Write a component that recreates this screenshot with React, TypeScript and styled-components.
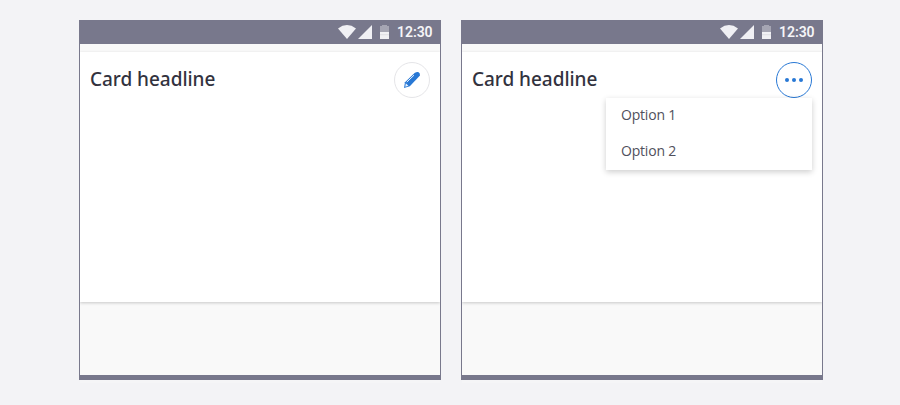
import React from "react";
import styled, { createGlobalStyle } from "styled-components";

const GlobalStyle = createGlobalStyle`
  * { box-sizing: border-box; }
  body { margin: 0; background: #f3f3f6; }
`;

const Page = styled.main`
  display: flex;
  gap: 20px;
  height: 405px;
  padding: 20px 77px 0 79px;
  background: #f3f3f6;
  font-family: "Noto Sans", sans-serif;
`;

const Device = styled.section`
  display: flex;
  flex-direction: column;
  width: 362px;
  height: 360px;
  border: 1px solid #78788c;
  border-width: 0 1px 5px;
  background: #f9f9f9;
  box-shadow: 0 4px 0 -1px #f5f5f7;
  overflow: hidden;
`;

const StatusBar = styled.header`
  display: flex;
  align-items: center;
  justify-content: flex-end;
  height: 24px;
  flex: none;
  padding-right: 7px;
  background: #78788c;
`;

const StatusIcons = styled.svg`
  display: block;
  width: 54px;
  height: 24px;
  margin-right: 5.5px;
`;

const Clock = styled.span`
  width: 36px;
  color: #f5f5f8;
  font: 600 14px/24px Roboto, sans-serif;
  letter-spacing: -0.05px;
  white-space: nowrap;
`;

const Card = styled.article`
  display: flex;
  align-items: flex-start;
  justify-content: space-between;
  height: 250px;
  margin-top: 8px;
  padding: 10px 10px 0;
  background: #fff;
  box-shadow: 0 1px 3px rgba(0, 0, 0, 0.2);
`;

const Headline = styled.h2`
  margin: 0;
  color: #32323e;
  font-size: 19px;
  font-weight: 500;
  line-height: 34px;
  letter-spacing: -0.04px;
  white-space: nowrap;
`;

const Actions = styled.div`
  position: relative;
  width: 36px;
  height: 36px;
`;

const RoundButton = styled.button<{ $active?: boolean }>`
  display: grid;
  place-items: center;
  width: 36px;
  height: 36px;
  padding: 0;
  border: 1px solid ${(p) => (p.$active ? "#2878d5" : "#e5e5e8")};
  border-radius: 50%;
  background: #fff;
`;

const Glyph = styled.svg`
  display: block;
  width: 20px;
  height: 20px;
`;

const Menu = styled.ul`
  position: absolute;
  top: 36px;
  right: 0;
  width: 206px;
  margin: 0;
  padding: 0;
  background: #fff;
  box-shadow: 0 2px 6px rgba(0, 0, 0, 0.2);
  list-style: none;
`;

const MenuItem = styled.li`
  height: 36px;
  padding-left: 15px;
  color: #50505c;
  font-family: "Open Sans", "Noto Sans", sans-serif;
  font-size: 14px;
  font-weight: 400;
  line-height: 34px;
  letter-spacing: -0.2px;
`;

function StatusRow() {
  return (
    <StatusBar>
      <StatusIcons viewBox="0 0 54 24" fill="#f0f0f4" aria-hidden="true">
        <path d="M0 8.4 Q9 1.6 18 8.4 L9 19Z" />
        <path d="M34 5V19H20Z" />
        <path d="M44 5V6H42V12H51V6H49V5Z" fill="#a5a5b3" />
        <path d="M42 12H51V19H42Z" />
        <path d="M42 14.7H51" stroke="#d5d5dc" strokeWidth="0.7" />
      </StatusIcons>
      <Clock>12:30</Clock>
    </StatusBar>
  );
}

function PencilIcon() {
  return (
    <Glyph viewBox="0 0 20 20" aria-hidden="true">
      <path d="M3 12.2 12.6 2.9Q14.3 1.7 16.2 2 18.2 3 18 5.4L7.8 16.3 2 18Z" fill="#2878d5" />
      <path d="M4.8 12.1 12 5.2" stroke="#e8f3ff" strokeWidth="1" />
      <path d="M3.8 13.3 6.4 15.8 3.3 16.8Z" fill="#e8f3ff" />
    </Glyph>
  );
}

function MoreIcon() {
  return (
    <Glyph viewBox="0 0 20 20" fill="#2878d5" aria-hidden="true">
      <circle cx="3" cy="10" r="2" />
      <circle cx="10" cy="10" r="2" />
      <circle cx="17" cy="10" r="2" />
    </Glyph>
  );
}

export default function App() {
  return (
    <>
      <GlobalStyle />
      <Page>
        <Device>
          <StatusRow />
          <Card>
            <Headline>Card headline</Headline>
            <Actions>
              <RoundButton aria-label="Edit"><PencilIcon /></RoundButton>
            </Actions>
          </Card>
        </Device>
        <Device>
          <StatusRow />
          <Card>
            <Headline>Card headline</Headline>
            <Actions>
              <RoundButton $active aria-label="More options"><MoreIcon /></RoundButton>
              <Menu>
                <MenuItem>Option 1</MenuItem>
                <MenuItem>Option 2</MenuItem>
              </Menu>
            </Actions>
          </Card>
        </Device>
      </Page>
    </>
  );
}
